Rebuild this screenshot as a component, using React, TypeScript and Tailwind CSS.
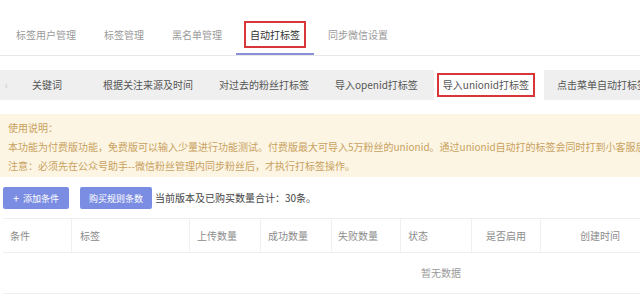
const topTabs = ["标签用户管理", "标签管理", "黑名单管理", "自动打标签", "同步微信设置"];

const subTabs = [
  { label: "关键词", cls: "pl-[14px] pr-[28px]" },
  { label: "根据关注来源及时间", cls: "px-[13px]" },
  { label: "对过去的粉丝打标签", cls: "px-[13px]" },
  { label: "导入openid打标签", cls: "pl-[13px] pr-[16px]" },
  { label: "导入unionid打标签", cls: "" },
  { label: "点击菜单自动打标签", cls: "px-[13px]" },
];

const columns = [
  { label: "条件", cls: "w-[69px] pl-[7px]" },
  { label: "标签", cls: "w-[118px] pl-[8px]" },
  { label: "上传数量", cls: "w-[71px] pl-[7px]" },
  { label: "成功数量", cls: "w-[71px] pl-[7px]" },
  { label: "失败数量", cls: "w-[69px] pl-[6px]" },
  { label: "状态", cls: "w-[71px] pl-[7px]" },
  { label: "是否启用", cls: "w-[69px] justify-center" },
  { label: "创建时间", cls: "w-[118px] justify-center" },
];

const App = () => {
  return (
    <main className="w-[640px] h-[295px] overflow-hidden bg-white text-[10px] leading-none font-['Noto_Sans_CJK_SC','Noto_Sans',sans-serif]">
      {/* top tabs */}
      <div className="pt-[19px] pl-[2px] flex border-b border-[#e8e8e8]">
        {topTabs.map((t) => {
          const active = t === "自动打标签";
          return (
            <div
              key={t}
              className={`h-[36px] px-[8px] pt-[2px] ${
                active ? "border-b-2 border-[#8b8fd8] text-[#333]" : "text-[#9a9a9a]"
              }`}
            >
              <span
                className={`h-[27px] flex items-center px-[4px] border-2 ${
                  active ? "border-[#d9363a]" : "border-transparent"
                }`}
              >
                {t}
              </span>
            </div>
          );
        })}
      </div>

      {/* sub tabs */}
      <div className="mt-[14px] h-[30px] bg-[#efefef] flex items-stretch whitespace-nowrap text-[#555] overflow-hidden">
        <div className="w-[18px] shrink-0 flex items-center pl-[5px] text-[#c8c8c8]">‹</div>
        {subTabs.map((t) =>
          t.label === "导入unionid打标签" ? (
            <div key={t.label} className="shrink-0 bg-white pl-[3px] pr-[9px] py-[3px] flex">
              <span className="border-2 border-[#d9363a] px-[4px] flex items-center">{t.label}</span>
            </div>
          ) : (
            <div key={t.label} className={`shrink-0 flex items-center ${t.cls}`}>
              {t.label}
            </div>
          )
        )}
      </div>

      {/* notice */}
      <div className="mt-[14px] bg-[#fcf5e3] text-[#c9a15f] pl-[8px] pt-[4px] pb-[2px] leading-[19px] whitespace-nowrap overflow-hidden">
        <p>使用说明：</p>
        <p>
          本功能为付费版功能，免费版可以输入少量进行功能测试。付费版最大可导入5万粉丝的unionid。通过unionid自动打的标签会同时打到小客服后台。
        </p>
        <p>注意：必须先在公众号助手--微信粉丝管理内同步粉丝后，才执行打标签操作。</p>
      </div>

      {/* actions */}
      <div className="mt-[10px] pl-[3px] flex items-center">
        <button className="h-[22px] w-[66px] bg-[#7b8de2] text-white text-[9px] rounded-[2px] flex items-center justify-center gap-[4px]">
          <span className="text-[11px]">+</span>
          <span>添加条件</span>
        </button>
        <button className="ml-[11px] h-[22px] w-[72px] bg-[#7b8de2] text-white text-[9px] rounded-[2px]">
          购买规则条数
        </button>
        <span className="ml-[3px] text-[#444]">当前版本及已购买数量合计：30条。</span>
      </div>

      {/* table */}
      <div className="mt-[9px] ml-[3px] border-t border-[#eeeeee]">
        <div className="flex h-[34px] border-b border-[#eeeeee] text-[#8c8c8c]">
          {columns.map((c, i) => (
            <div
              key={c.label}
              className={`flex items-center shrink-0 ${c.cls} ${
                i < columns.length - 1 ? "border-r border-[#f0f0f0]" : ""
              }`}
            >
              {c.label}
            </div>
          ))}
        </div>
        <div className="h-[41px] border-b border-[#f3eeee] flex items-center pl-[418px] text-[#999]">
          暂无数据
        </div>
      </div>
    </main>
  );
};

export default App;
